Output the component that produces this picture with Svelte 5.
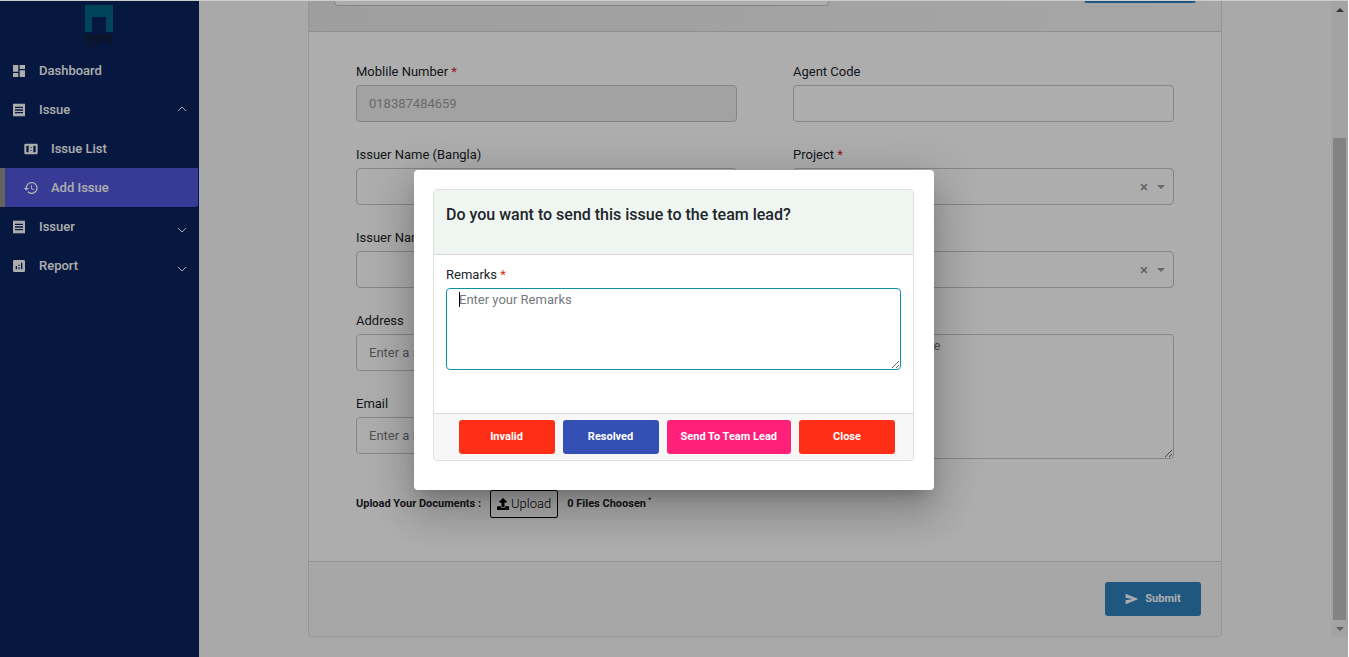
<script>
  const icons = {
    dashboard: 'M3 13h8V3H3v10zm0 8h8v-6H3v6zm10 0h8V11h-8v10zm0-18v6h8V3h-8z',
    receipt:
      'M18 17H6v-2h12v2zm0-4H6v-2h12v2zm0-4H6V7h12v2zM3 22l1.5-1.5L6 22l1.5-1.5L9 22l1.5-1.5L12 22l1.5-1.5L15 22l1.5-1.5L18 22l1.5-1.5L21 22V2l-1.5 1.5L18 2l-1.5 1.5L15 2l-1.5 1.5L12 2l-1.5 1.5L9 2 7.5 3.5 6 2 4.5 3.5 3 2v20z',
    atm: 'M4 4h16q2 0 2 2v12q0 2-2 2H4q-2 0-2-2V6q0-2 2-2zM5 7v10h3.500V7zM15.500 7v10H19V7zM11 9v1h2V9zM11 14v1h2v-1z',
    history:
      'M13 3c-4.970 0-9 4.030-9 9H1l3.890 3.890.070.140L9 12H6c0-3.870 3.130-7 7-7s7 3.130 7 7-3.130 7-7 7c-1.930 0-3.680-.790-4.940-2.060l-1.420 1.420C8.270 19.990 10.510 21 13 21c4.970 0 9-4.030 9-9s-4.030-9-9-9zm-1 5v5l4.280 2.540.720-1.210-3.500-2.080V8H12z',
    report:
      'M19 3H5c-1.100 0-2 .9-2 2v14c0 1.100.9 2 2 2h14c1.100 0 2-.9 2-2V5c0-1.100-.9-2-2-2zM9 17H7v-5h2v5zm4 0h-2v-3h2v3zm0-5h-2v-2h2v2zm4 5h-2V7h2v10z'
  };

  const menu = [
    { label: 'Dashboard', icon: 'dashboard' },
    { label: 'Issue', icon: 'receipt', arrow: 'up' },
    { label: 'Issue List', icon: 'atm', sub: true },
    { label: 'Add Issue', icon: 'history', sub: true, active: true },
    { label: 'Issuer', icon: 'receipt', arrow: 'down' },
    { label: 'Report', icon: 'report', arrow: 'down' }
  ];

  const left = [
    { id: 'mobile', label: 'Moblile Number', required: true, value: '018387484659', disabled: true },
    { id: 'name-bn', label: 'Issuer Name (Bangla)' },
    { id: 'name-en', label: 'Issuer Name (English)' },
    { id: 'address', label: 'Address', placeholder: 'Enter a address' },
    { id: 'email', label: 'Email', placeholder: 'Enter a Email' }
  ];

  const actions = [
    { label: 'Invalid', tone: 'red' },
    { label: 'Resolved', tone: 'blue' },
    { label: 'Send To Team Lead', tone: 'pink' },
    { label: 'Close', tone: 'red' }
  ];
</script>

<div class="app">
  <nav class="sidebar">
    <div class="brand">
      <svg width="28" height="27" viewBox="0 0 28 27" aria-hidden="true">
        <path d="M0 0h28v27h-7V12H7v15H0z" fill="#006587" />
      </svg>
      <span lang="bn">দুয়ার</span>
    </div>
    {#each menu as item}
      <a href="#{item.label}" class="item" class:sub={item.sub} class:active={item.active}>
        <svg class="glyph" viewBox="0 0 24 24" aria-hidden="true"><path fill-rule="evenodd" d={icons[item.icon]} /></svg>
        <span>{item.label}</span>
        {#if item.arrow}
          <svg class="arrow {item.arrow}" viewBox="0 0 10 6" aria-hidden="true"><path d="M1 5l4-4 4 4" /></svg>
        {/if}
      </a>
    {/each}
  </nav>

  <main>
    <section class="card">
      <header class="toolbar">
        <input class="control search" aria-label="Search" />
        <div class="find"><button class="btn primary" aria-label="Find"></button></div>
      </header>

      <form class="form">
        <div class="columns">
          <div class="column">
            {#each left as f}
              <div class="field">
                <label for={f.id}>{f.label}{#if f.required}<b class="req">&nbsp;*</b>{/if}</label>
                <input class="control" id={f.id} value={f.value ?? ''} placeholder={f.placeholder} disabled={f.disabled} />
              </div>
            {/each}
          </div>
          <div class="column">
            <div class="field">
              <label for="agent">Agent Code</label>
              <input class="control" id="agent" />
            </div>
            {#each ['Project', 'Category'] as name}
              <div class="field">
                <label for={name}>{name}<b class="req">&nbsp;*</b></label>
                <div class="picker">
                  <select class="control" id={name}></select>
                  <button type="button" class="clear" aria-label="Clear">×</button>
                  <i class="caret"></i>
                </div>
              </div>
            {/each}
            <div class="field">
              <label for="note">Remark</label>
              <textarea class="control note" id="note" placeholder="Enter your Remark here"></textarea>
            </div>
          </div>
        </div>
        <div class="upload">
          <strong>Upload Your Documents :</strong>
          <button type="button" class="file">
            <svg width="12" height="12" viewBox="0 0 512 512" aria-hidden="true">
              <path d="M296 384h-80c-13.300 0-24-10.700-24-24V192h-87.700c-17.800 0-26.700-21.500-14.100-34.100L242.300 5.700c7.500-7.500 19.800-7.500 27.300 0l152.200 152.200c12.600 12.600 3.700 34.100-14.100 34.100H320v168c0 13.300-10.700 24-24 24zm216-8v112c0 13.300-10.700 24-24 24H24c-13.300 0-24-10.700-24-24V376c0-13.300 10.700-24 24-24h136v8c0 30.900 25.100 56 56 56h80c30.900 0 56-25.100 56-56v-8h136c13.300 0 24 10.700 24 24zm-124 88c0-11-9-20-20-20s-20 9-20 20 9 20 20 20 20-9 20-20zm64 0c0-11-9-20-20-20s-20 9-20 20 9 20 20 20 20-9 20-20z" />
            </svg>
            Upload
          </button>
          <strong>0 Files Choosen<sup>*</sup></strong>
        </div>
      </form>

      <footer class="submit-bar">
        <button class="btn primary">
          <svg width="14" height="14" viewBox="0 0 24 24" aria-hidden="true"><path d="M1 21l22-9L1 3v7l12 2-12 2z" fill="#fff" /></svg>
          Submit
        </button>
      </footer>
    </section>
  </main>

  <div class="scroll" aria-hidden="true">
    <i class="tri top"></i>
    <div class="track"><div class="thumb"></div></div>
    <i class="tri bottom"></i>
  </div>

  <div class="backdrop">
    <div class="dialog" role="dialog" aria-modal="true" aria-labelledby="dialog-title">
      <div class="panel">
        <h2 id="dialog-title">Do you want to send this issue to the team lead?</h2>
        <div class="remarks">
          <label for="remarks">Remarks<b class="req">&nbsp;*</b></label>
          <div class="entry">
            <textarea class="control" id="remarks" placeholder="Enter your Remarks"></textarea>
            <i class="cursor"></i>
          </div>
        </div>
        <div class="actions">
          {#each actions as a}
            <button class="btn {a.tone}">{a.label}</button>
          {/each}
        </div>
      </div>
    </div>
  </div>
</div>

<style>
  :global(body) {
    background: #fff;
  }
  .app,
  .app * {
    box-sizing: border-box;
  }
  .app {
    position: relative;
    display: flex;
    min-height: 100vh;
    margin-right: 1px;
    border-top: 1px solid #cdcdcd;
    background: #f9f9f9;
    color: #212529;
    font: 13px/18px Roboto, sans-serif;
    overflow: hidden;
  }
  button,
  input,
  textarea,
  select {
    font: inherit;
    color: inherit;
  }

  .sidebar {
    flex: 0 0 199px;
    background: #09245d;
  }
  .brand {
    display: flex;
    flex-direction: column;
    align-items: center;
    height: 50px;
    margin-right: 1px;
    padding-top: 4px;
    color: #1c1d24;
    font: 14px/18px "Noto Sans Bengali", "Noto Sans", sans-serif;
  }
  .brand svg {
    flex: none;
  }
  .item {
    display: flex;
    align-items: center;
    height: 39px;
    padding: 0 12px 0 11px;
    border-top: 1px solid #08205a;
    color: #fff;
    font-weight: 500;
    text-decoration: none;
  }
  .item.sub {
    padding-left: 23px;
    border-top: 0;
  }
  .item.active {
    margin-right: 1px;
    padding-left: 18px;
    border-left: 5px solid #96938c;
    border-radius: 0 0 3px 0;
    background: #5157dd;
  }
  .glyph {
    width: 16px;
    height: 16px;
    margin-right: 12px;
    fill: #fff;
  }
  .arrow {
    width: 10px;
    height: 6px;
    margin-left: auto;
    margin-bottom: 3px;
    fill: none;
    stroke: #fff;
  }
  .arrow.down {
    margin: 6px 0 0 auto;
    transform: rotate(180deg);
  }

  main {
    flex: 1;
    min-width: 0;
    padding: 0 109px;
  }
  .card {
    border: 1px solid #dedede;
    border-top: 0;
    border-radius: 0 0 4px 4px;
    background: #fff;
  }
  .toolbar {
    display: flex;
    align-items: flex-end;
    justify-content: space-between;
    height: 31px;
    padding: 0 25px 25px;
    border-bottom: 1px solid #d2d2d2;
    background: linear-gradient(90deg, #e9e9e9, #f5f5f5);
    overflow: hidden;
  }
  .search {
    flex: 0 1 495px;
  }
  .find {
    padding-bottom: 3px;
  }
  .find .btn {
    width: 112px;
  }
  .form {
    padding: 31px 47px 43px;
  }
  .columns {
    display: flex;
    gap: 56px;
  }
  .column {
    flex: 1;
    min-width: 0;
    display: flex;
    flex-direction: column;
    gap: 24px;
  }
  .field {
    display: flex;
    flex-direction: column;
    gap: 4px;
  }
  .req {
    color: #d9310f;
    font-weight: 400;
  }
  .card .req {
    color: #d0202e;
  }
  .control {
    display: block;
    width: 100%;
    height: 37px;
    margin: 0;
    padding: 0 12px;
    border: 1px solid #c4c4c4;
    border-radius: 4px;
    outline: 0;
    background: #fff;
    appearance: none;
  }
  .control::placeholder {
    color: #75797d;
    opacity: 1;
  }
  .control:disabled {
    background: #efefef;
    color: #9c9c9c;
  }
  .note {
    height: 125px;
    padding-top: 2px;
  }
  .picker {
    position: relative;
  }
  .clear {
    position: absolute;
    top: 10px;
    right: 26px;
    padding: 0;
    border: 0;
    background: none;
    color: #8e8e8e;
    font-size: 15px;
    font-weight: 500;
  }
  .caret {
    position: absolute;
    top: 17px;
    right: 9px;
    border: 4px solid transparent;
    border-top-color: #999;
    border-bottom: 0;
  }
  .upload {
    display: flex;
    align-items: center;
    gap: 9px;
    margin-top: 31px;
    font-size: 11px;
  }
  .upload strong {
    font-weight: 700;
  }
  .upload sup {
    margin-left: 2px;
    font-size: 8px;
    line-height: 0;
    font-weight: 400;
  }
  .file {
    display: flex;
    align-items: center;
    gap: 2px;
    height: 28px;
    padding: 0 6px;
    border: 1px solid #000;
    border-radius: 2px;
    background: none;
    font-size: 13px;
    font-weight: 300;
    color: #000;
  }
  .submit-bar {
    display: flex;
    justify-content: flex-end;
    padding: 20px;
    border-top: 1px solid #d6d6d6;
    border-radius: 0 0 4px 4px;
    background: #f7f7f7;
  }
  .btn {
    display: flex;
    align-items: center;
    justify-content: center;
    gap: 6px;
    min-width: 96px;
    height: 34px;
    padding: 0 14px;
    border: 0;
    border-radius: 3px;
    color: #fff;
    font-size: 11px;
    font-weight: 700;
  }
  .primary {
    background: #2f81bf;
  }
  .red {
    background: #ff2e17;
  }
  .blue {
    background: #3550b5;
  }
  .pink {
    background: #ff2079;
  }

  .scroll {
    display: flex;
    flex-direction: column;
    align-items: center;
    flex: 0 0 17px;
    margin-bottom: 20px;
    background: #f1f1f1;
  }
  .track {
    flex: 1;
    display: flex;
    flex-direction: column;
    justify-content: flex-end;
  }
  .thumb {
    width: 13px;
    height: 80%;
    background: #c1c1c1;
  }
  .tri {
    border: 4px solid transparent;
    border-top: 0;
    border-bottom-color: #505050;
    margin: 7px 0 6px;
  }
  .tri.bottom {
    border: 4px solid transparent;
    border-bottom: 0;
    border-top-color: #909090;
  }

  .backdrop {
    position: absolute;
    inset: 0;
    display: flex;
    align-items: center;
    justify-content: center;
    padding-top: 2px;
    background: rgba(0, 0, 0, 0.32);
  }
  .dialog {
    width: 520px;
    max-width: 90%;
    padding: 19px 20px 29px 19px;
    border-radius: 4px;
    background: #fff;
    box-shadow:
      0 11px 15px -7px rgba(0, 0, 0, 0.2),
      0 24px 38px 3px rgba(0, 0, 0, 0.14),
      0 9px 46px 8px rgba(0, 0, 0, 0.12);
  }
  .panel {
    border: 1px solid #dfdfdf;
    border-radius: 4px;
    overflow: hidden;
  }
  h2 {
    margin: 0;
    padding: 13px 12px 27px;
    border-bottom: 1px solid #d5d8d6;
    background: #eff5f1;
    color: #212529;
    font-size: 16px;
    line-height: 24px;
    font-weight: 500;
  }
  .remarks {
    display: flex;
    flex-direction: column;
    gap: 4px;
    padding: 11px 12px 43px;
  }
  .entry {
    position: relative;
  }
  .entry .control {
    height: 82px;
    padding-top: 2px;
    border-color: #0a93a8;
  }
  .cursor {
    position: absolute;
    top: 4px;
    left: 13px;
    width: 1px;
    height: 15px;
    background: #000;
  }
  .actions {
    display: flex;
    justify-content: flex-end;
    gap: 8px;
    padding: 6px 18px;
    border-top: 1px solid #dadada;
    background: #f7f7f7;
  }
</style>
